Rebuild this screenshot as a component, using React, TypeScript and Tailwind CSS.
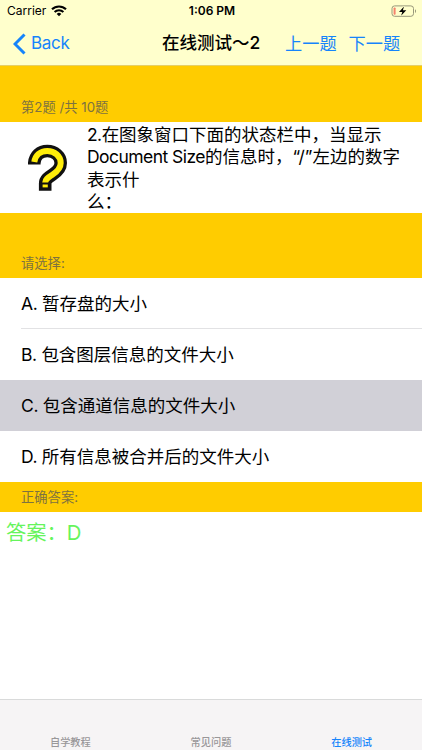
import type { ReactNode } from "react";

const options = [
  { key: "A", text: "暂存盘的大小" },
  { key: "B", text: "包含图层信息的文件大小" },
  { key: "C", text: "包含通道信息的文件大小" },
  { key: "D", text: "所有信息被合并后的文件大小" },
];

const questionLines = [
  { latin: "2.", text: "在图象窗口下面的状态栏中，当显示" },
  { latin: "Document Size", text: "的信息时，“/”左边的数字" },
  { latin: "", text: "表示什" },
  { latin: "", text: "么：" },
];

const tabs = ["自学教程", "常见问题", "在线测试"];

function WifiIcon() {
  return (
    <svg viewBox="0 0 16 12" className="h-[12px] w-[16px]" fill="none" stroke="#000">
      <path d="M1 4.3a10 10 0 0 1 14 0" strokeWidth="2.1" />
      <path d="M3.6 7a6.2 6.2 0 0 1 8.8 0" strokeWidth="2" />
      <path d="M8 11.3 5.7 9a3.2 3.2 0 0 1 4.6 0z" fill="#000" stroke="none" />
    </svg>
  );
}

function BatteryIcon() {
  return (
    <svg viewBox="0 0 26 12" className="h-[12px] w-[26px]">
      <rect x="1" y="0.9" width="21.5" height="10.4" rx="2.6" fill="none" stroke="#98977a" />
      <rect x="2.6" y="2.5" width="2" height="7.2" rx="0.8" fill="#f5826c" />
      <path d="M24 4.2c1.4.5 1.4 3.2 0 3.8z" fill="#98977a" />
      <path d="M13 1.6 8 6.9h3.3l-1.2 3.9 5.2-5.5h-3.4z" fill="#000" stroke="#ffffcc" strokeWidth="1.6" paintOrder="stroke" />
    </svg>
  );
}

function QuestionIcon() {
  return (
    <svg viewBox="0 0 41 48" className="h-[48px] w-[41px]" fill="none" strokeLinejoin="round">
      <path d="M7.3 20.500V19C7.800 12 13 7 20.300 7s13.400 5 13.400 12c0 5.500-3.500 8.500-8 11.500-4.500 3-7.500 5-7.500 9v7.300" stroke="#111" strokeWidth="12.600" />
      <path d="M7.3 18C8.300 11.500 13 7 20.300 7s13.400 5 13.400 12c0 5.500-3.500 8.500-8 11.500-4.500 3-7.500 4.500-7.500 8" stroke="#ffed0a" strokeWidth="6" />
      <path d="M15.600 40.500h5.200v2.900h-5.200z" fill="#ffed0a" />
    </svg>
  );
}

function SectionHeader({ className, children }: { className: string; children: ReactNode }) {
  return (
    <div className={`flex items-end bg-[#ffcc00] pl-[21px] text-[13.300px] leading-[18px] text-[#7d7240] ${className}`}>
      {children}
    </div>
  );
}

export default function App() {
  return (
    <div className="flex h-[750px] w-[422px] flex-col overflow-hidden bg-white font-[Inter,'Noto_Sans_CJK_SC',sans-serif] text-black">
      <header className="h-[66px] shrink-0 border-b border-[#e5cf66] bg-[#ffffcc]">
        <div className="grid h-[22px] grid-cols-3 items-center pl-[7px] pr-[5px] text-[12px]">
          <div className="flex items-center gap-[5px]">
            <span>Carrier</span>
            <WifiIcon />
          </div>
          <span className="text-center font-semibold">1:06 PM</span>
          <div className="flex justify-end">
            <BatteryIcon />
          </div>
        </div>
        <nav className="flex h-[43px] items-center text-[17px]">
          <div className="flex w-[162px] items-center pl-[13px] text-[#1684fb]">
            <svg viewBox="0 0 13 22" className="h-[22px] w-[13px]" fill="none" stroke="currentColor" strokeWidth="3">
              <path d="M11.500 1.500 2 11l9.500 9.500" />
            </svg>
            <span className="ml-[5px] tracking-[-0.3px]">Back</span>
          </div>
          <h1 className="w-[123px] whitespace-nowrap text-[17.500px] font-medium">在线测试～2</h1>
          <div className="flex gap-[12px] whitespace-nowrap text-[17.2px] text-[#1684fb]">
            <span>上一题</span>
            <span>下一题</span>
          </div>
        </nav>
      </header>

      <main className="flex flex-1 flex-col">
        <SectionHeader className="h-[56px] pb-[6px]">第2题 /共 10题</SectionHeader>
        <section className="flex h-[91px] items-center">
          <div className="w-[87px] pl-[27px]">
            <QuestionIcon />
          </div>
          <div className="whitespace-nowrap pt-[2px] text-[17.5px] leading-[22.300px]">
            {questionLines.map((line) => (
              <p key={line.text}>
                <span className="tracking-[-0.55px]">{line.latin}</span>
                {line.text}
              </p>
            ))}
          </div>
        </section>
        <SectionHeader className="h-[65px] pb-[6px]">请选择:</SectionHeader>
        <ul className="text-[17.5px]">
          {options.map((option) => (
            <li key={option.key} className={`h-[51px] pl-[21px] ${option.key === "C" ? "bg-[#d1d0d7]" : ""}`}>
              <div className={`flex h-full items-center pt-[2px] ${option.key === "A" ? "border-b border-[#e2e2e4]" : ""}`}>
                <span className="whitespace-pre tracking-[-0.35px]">{option.key}. </span>
                <span>{option.text}</span>
              </div>
            </li>
          ))}
        </ul>
        <SectionHeader className="h-[30px] pb-[6px]">正确答案:</SectionHeader>
        <p className="pl-[6px] pt-[6px] text-[20.300px] leading-[30px] text-[#66f45c]">答案：D</p>
      </main>

      <footer className="grid h-[51px] shrink-0 grid-cols-3 border-t border-[#d9dada] bg-[#f6f4f5] pt-[35px] text-center text-[10.200px] font-medium leading-[15px]">
        {tabs.map((tab) => (
          <span key={tab} className={tab === "在线测试" ? "text-[#1684fb]" : "text-[#999799]"}>
            {tab}
          </span>
        ))}
      </footer>
    </div>
  );
}
